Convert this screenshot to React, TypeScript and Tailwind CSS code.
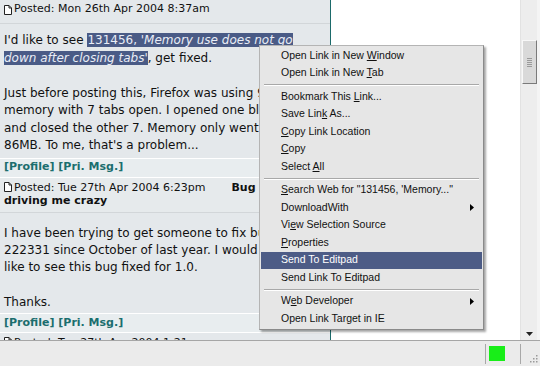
import React from 'react';

const DocIcon = () => (
  <svg width="8" height="10" viewBox="0 0 8 10" className="mr-[2px] shrink-0">
    <path d="M0.5 0.5 H5 L7.5 3 V9.5 H0.5 Z" fill="#fff" stroke="#222" strokeWidth="1" />
    <path d="M5 0.5 V3 H7.5" fill="none" stroke="#222" strokeWidth="1" />
  </svg>
);

const Arrow = () => (
  <svg width="4" height="7" viewBox="0 0 4 7" className="absolute right-[8px] top-[5px]">
    <polygon points="0,0 4,3.5 0,7" fill="#000" />
  </svg>
);

type Item = { label: React.ReactNode; sub?: boolean; active?: boolean } | 'sep';

const items: Item[] = [
  { label: <>Open Link in New <u>W</u>indow</> },
  { label: <>Open Link in New <u>T</u>ab</> },
  'sep',
  { label: <>Bookmark This <u>L</u>ink...</> },
  { label: <>Save Lin<u>k</u> As...</> },
  { label: <><u>C</u>opy Link Location</> },
  { label: <><u>C</u>opy</> },
  { label: <>Select <u>A</u>ll</> },
  'sep',
  { label: <><u>S</u>earch Web for "131456, 'Memory..."</> },
  { label: <>DownloadWith</>, sub: true },
  { label: <>Vi<u>e</u>w Selection Source</> },
  { label: <><u>P</u>roperties</> },
  { label: <>Send To Editpad</>, active: true },
  { label: <>Send Link To Editpad</> },
  'sep',
  { label: <>W<u>e</u>b Developer</>, sub: true },
  { label: <>Open Link Target in IE</> },
];

const ContextMenu = () => (
  <div
    className="absolute left-[259px] top-[45px] w-[225px] bg-[#e6e6e6] border border-[#b4b4b4] border-r-[#8a8a8a] border-b-[#8a8a8a] shadow-[2px_2px_2px_rgba(0,0,0,0.35)] py-[1px] text-[10.5px] text-[#111]"
    style={{ fontFamily: '"Liberation Sans", Arial, sans-serif' }}
  >
    {items.map((it, i) =>
      it === 'sep' ? (
        <div key={i} className="h-[6px] flex items-center px-[4px]">
          <div className="w-full border-t border-[#a8a8a8] border-b border-b-white" />
        </div>
      ) : (
        <div
          key={i}
          className={`relative h-[17.5px] mx-[1px] flex items-center pl-[20px] whitespace-nowrap ${
            it.active ? 'bg-[#4d5c86] text-white' : ''
          }`}
        >
          <span>{it.label}</span>
          {it.sub && <Arrow />}
        </div>
      )
    )}
  </div>
);

const ProfileRow = () => (
  <div className="h-[20px] flex items-center px-[4px] bg-[#e8edef] border-t border-white border-b text-[11px] font-bold text-[#1b6e6e]">
    [Profile] [Pri. Msg.]
  </div>
);

export default function App() {
  return (
    <div
      className="relative w-[540px] h-[366px] overflow-hidden flex flex-col bg-white"
      style={{ fontFamily: '"DejaVu Sans", Verdana, sans-serif' }}
    >
      <div className="h-[340px] flex">
        {/* post column */}
        <div className="w-[331px] shrink-0 bg-[#e4e8eb] border-r border-[#1b6a6a] overflow-hidden text-[#111]">
          {/* post 1 */}
          <div className="h-[24px] flex items-center px-[4px] pb-[4px] text-[11px] border-b border-[#d2d6d9]">
            <DocIcon />
            Posted: Mon 26th Apr 2004 8:37am
          </div>
          <div className="px-[4px] pt-[8px] text-[12px] leading-[17.5px] whitespace-nowrap">
            I'd like to see{' '}
            <span className="bg-[#4a5b86] text-[#e9edf6]">
              131456, <i>'Memory use does not go</i>
            </span>
            <br />
            <span className="bg-[#4a5b86] text-[#e9edf6]">
              <i>down after closing tabs'</i>
            </span>
            , get fixed.
            <br />
            <br />
            Just before posting this, Firefox was using 94MB of
            <br />
            memory with 7 tabs open. I opened one blank tab
            <br />
            and closed the other 7. Memory only went down to
            <br />
            86MB. To me, that's a problem...
          </div>
          <div className="h-[3px]" />
          <ProfileRow />

          {/* post 2 */}
          <div className="px-[4px] pt-[3px] pb-[5px] text-[11px] leading-[13px] border-b border-[#d2d6d9] bg-[#e6eaec]">
            <div className="flex items-center whitespace-nowrap">
              <DocIcon />
              <span>Posted: Tue 27th Apr 2004 6:23pm</span>
              <span className="ml-[26px] font-bold">Bug 222331 is</span>
            </div>
            <div className="font-bold">driving me crazy</div>
          </div>
          <div className="px-[4px] pt-[12px] text-[12px] leading-[17.3px] whitespace-nowrap">
            I have been trying to get someone to fix bug
            <br />
            222331 since October of last year. I would really
            <br />
            like to see this bug fixed for 1.0.
            <br />
            <br />
            Thanks.
          </div>
          <div className="h-[2px]" />
          <ProfileRow />

          {/* post 3 (cut off by the status bar) */}
          <div className="flex items-center px-[4px] pt-[3px] text-[11px] leading-[13px] whitespace-nowrap">
            <DocIcon />
            Posted: Tue 27th Apr 2004 1:21am
          </div>
        </div>

        {/* right white area */}
        <div className="flex-1 bg-white" />

        {/* scrollbar */}
        <div className="w-[17px] shrink-0 bg-[#ededed] border-l border-[#e2e2e2] flex flex-col items-center pt-[40px] pb-[4px]">
          <div className="w-[15px] h-[44px] bg-[#d9d9d9] border border-[#f8f8f8] border-r-[#7a7a7a] border-b-[#7a7a7a] flex flex-col items-center justify-center gap-[1px]">
            {[0, 1, 2, 3, 4].map((n) => (
              <div key={n} className="w-[5px] h-[1px] bg-[#9a9a9a]" />
            ))}
          </div>
          <div className="flex-1" />
          <svg width="7" height="4" viewBox="0 0 7 4">
            <polygon points="0,0 7,0 3.5,4" fill="#222" />
          </svg>
        </div>
        <div className="w-[3px] bg-[#f4f4f4]" />
      </div>

      {/* status bar */}
      <div className="h-[26px] bg-[#ebebeb] border-t border-[#a6a6a6] flex items-center">
        <div className="flex-1" />
        <div className="h-[20px] w-[1px] bg-[#a8a8a8]" />
        <div className="w-[16px] h-[15px] ml-[3px] bg-[#18ee18]" />
        <div className="h-[20px] w-[1px] bg-[#a8a8a8] ml-[15px]" />
        <div className="w-[19px] h-full relative">
          <svg width="9" height="9" viewBox="0 0 9 9" className="absolute right-[2px] bottom-[3px]">
            {[
              [7, 1],
              [4, 4],
              [7, 4],
              [1, 7],
              [4, 7],
              [7, 7],
            ].map(([x, y], i) => (
              <rect key={i} x={x} y={y} width="1.5" height="1.5" fill="#9a9a9a" />
            ))}
          </svg>
        </div>
      </div>

      <ContextMenu />
    </div>
  );
}
